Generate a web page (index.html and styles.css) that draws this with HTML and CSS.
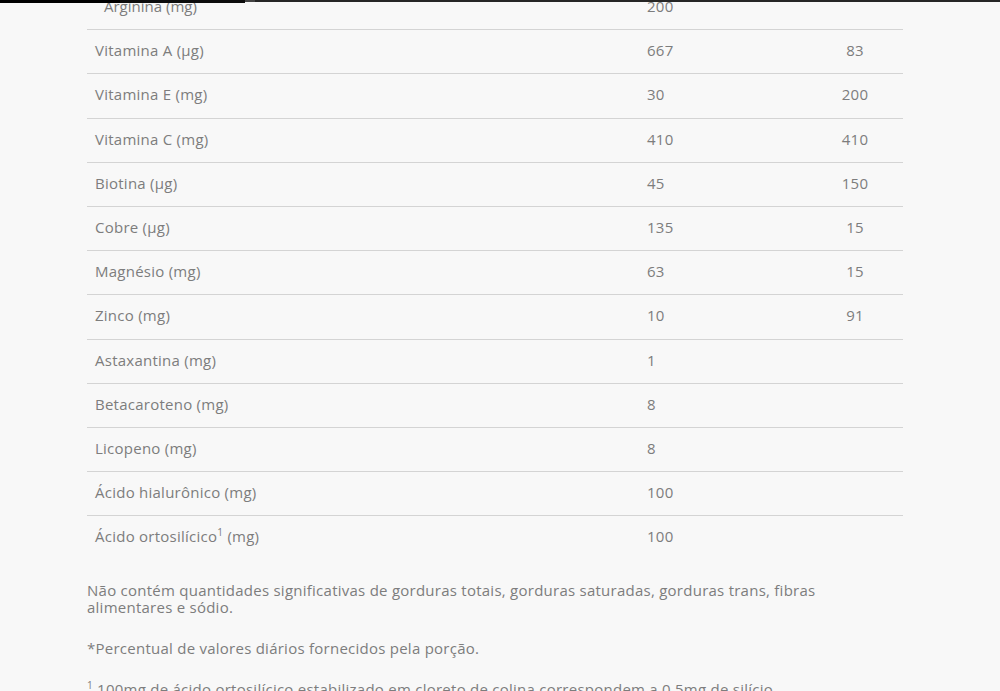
FILE: index.html
```html
<!DOCTYPE html>
<html lang="pt-BR">
<head>
<meta charset="utf-8">
<title>Tabela nutricional</title>
<link rel="stylesheet" href="styles.css">
</head>
<body>
<div class="topbar"><span class="seg seg-a"></span><span class="seg seg-b"></span><span class="seg seg-c"></span><span class="seg seg-d"></span></div>
<main class="content">
  <div class="table">
    <div class="row first"><div class="c1 shifted">Arginina (mg)</div><div class="c2">200</div><div class="c3"></div></div>
    <div class="row"><div class="c1">Vitamina A (µg)</div><div class="c2">667</div><div class="c3">83</div></div>
    <div class="row"><div class="c1">Vitamina E (mg)</div><div class="c2">30</div><div class="c3">200</div></div>
    <div class="row"><div class="c1">Vitamina C (mg)</div><div class="c2">410</div><div class="c3">410</div></div>
    <div class="row"><div class="c1">Biotina (µg)</div><div class="c2">45</div><div class="c3">150</div></div>
    <div class="row"><div class="c1">Cobre (µg)</div><div class="c2">135</div><div class="c3">15</div></div>
    <div class="row"><div class="c1">Magnésio (mg)</div><div class="c2">63</div><div class="c3">15</div></div>
    <div class="row"><div class="c1">Zinco (mg)</div><div class="c2">10</div><div class="c3">91</div></div>
    <div class="row"><div class="c1">Astaxantina (mg)</div><div class="c2">1</div><div class="c3"></div></div>
    <div class="row"><div class="c1">Betacaroteno (mg)</div><div class="c2">8</div><div class="c3"></div></div>
    <div class="row"><div class="c1">Licopeno (mg)</div><div class="c2">8</div><div class="c3"></div></div>
    <div class="row"><div class="c1">Ácido hialurônico (mg)</div><div class="c2">100</div><div class="c3"></div></div>
    <div class="row last"><div class="c1">Ácido ortosilícico<sup>1</sup> (mg)</div><div class="c2">100</div><div class="c3"></div></div>
  </div>
  <div class="notes">
    <p>Não contém quantidades significativas de gorduras totais, gorduras saturadas, gorduras trans, fibras alimentares e sódio.</p>
    <p>*Percentual de valores diários fornecidos pela porção.</p>
    <p><sup>1</sup> 100mg de ácido ortosilícico estabilizado em cloreto de colina correspondem a 0,5mg de silício.</p>
  </div>
</main>
</body>
</html>
```

FILE: styles.css
```css
html, body {
  margin: 0;
  padding: 0;
  background: #f8f8f8;
}
body {
  font-family: "Open Sans", "Liberation Sans", Arial, sans-serif;
  color: #7d7d7d;
  font-size: 15px;
  letter-spacing: 0.25px;
  overflow: hidden;
  height: 691px;
}
.topbar {
  position: fixed;
  top: 0;
  left: 0;
  width: 1000px;
  height: 3px;
  display: flex;
  z-index: 5;
}
.seg { display: block; height: 2px; }
.seg-a { width: 120px; background: #000; height: 3px; }
.seg-b { width: 125px; background: #0d0d0d; height: 3px; }
.seg-c { width: 10px; background: #444; }
.seg-d { flex: 1; background: #262626; }
.content {
  padding-left: 87px;
  width: 816px;
}
.table {
  margin-top: -14px;
}
.row {
  display: grid;
  grid-template-columns: 552px 168px 96px;
  height: 43.2px;
  align-items: center;
  border-bottom: 1px solid #d4d4d4;
}
.row.last { border-bottom: none; }
.c1, .c2, .c3 { padding-bottom: 3px; }
.c1 { padding-left: 8px; }
.c2 { padding-left: 8px; }
.c3 { text-align: center; }
.shifted { padding-left: 17px; letter-spacing: 0; }
sup {
  font-size: 10px;
  line-height: 0;
  vertical-align: 6px;
}
.notes {
  padding-top: 23px;
  width: 740px;
}
.notes p {
  margin: 0 0 24px 0;
  line-height: 17px;
}
```
